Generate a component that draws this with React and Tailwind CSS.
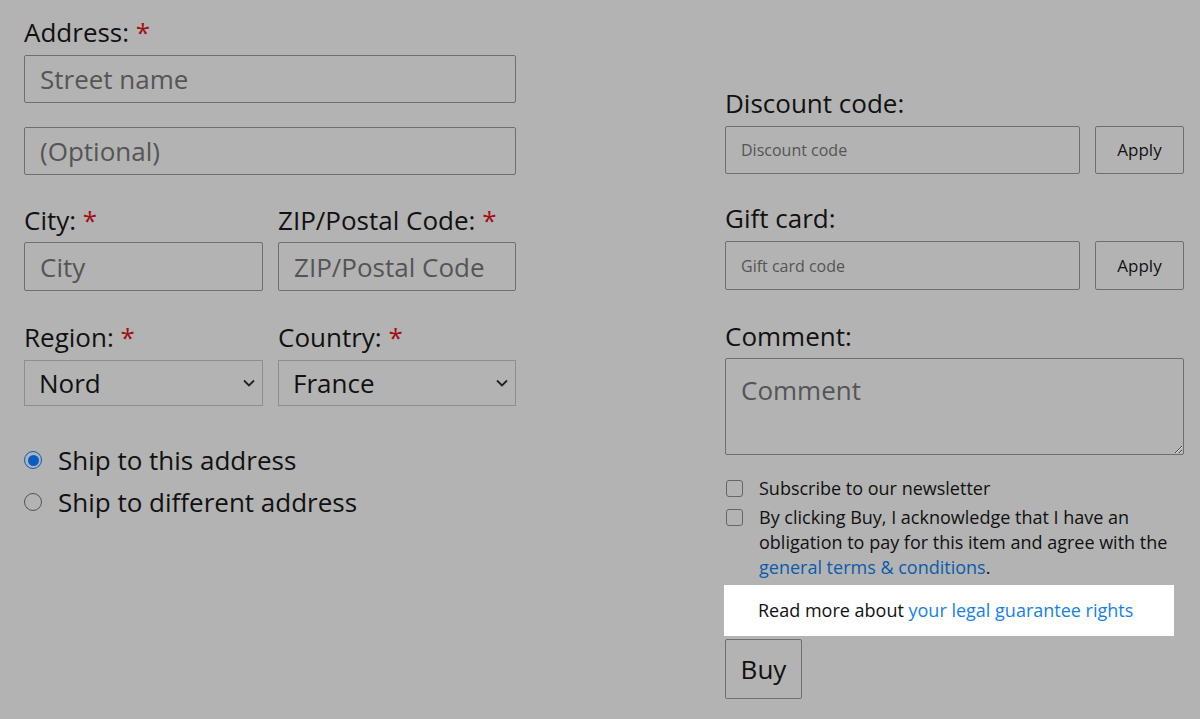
const font = { fontFamily: '"Open Sans", "Noto Sans", sans-serif' };

function Label({ children, required }) {
  return (
    <div className="text-[26px] leading-[34px] text-[#111]">
      {children}
      {required && <span className="text-[#a01010]"> *</span>}
    </div>
  );
}

function TextInput({ placeholder, h = "h-[48px]", size = "text-[26px]" }) {
  return (
    <input
      placeholder={placeholder}
      className={`w-full ${h} ${size} px-[15px] bg-transparent border border-[#6f6f6f] rounded-[2px] outline-none placeholder:text-[#555]`}
    />
  );
}

function Select({ value }) {
  return (
    <div className="relative h-[46px] border border-[#8e8e8e] flex items-center pl-[14px] text-[26px] text-[#111]">
      {value}
      <svg className="absolute right-[6px] top-[17px]" width="14" height="10" viewBox="0 0 14 10">
        <path d="M2 2.5 L7 7.5 L12 2.5" fill="none" stroke="#222" strokeWidth="1.8" />
      </svg>
    </div>
  );
}

function Checkbox() {
  return <span className="shrink-0 mt-[4px] ml-[1px] w-[17px] h-[17px] border-[1.5px] border-[#666] rounded-[3px]" />;
}

export default function App() {
  return (
    <div style={font} className="w-[1200px] h-[719px] bg-[#b3b3b3] flex pl-[24px] overflow-hidden">
      <div className="w-[492px] pt-[15px] flex flex-col">
        <Label required>Address:</Label>
        <div className="mt-[6px]">
          <TextInput placeholder="Street name" />
        </div>
        <div className="mt-[24px]">
          <TextInput placeholder="(Optional)" />
        </div>
        <div className="mt-[28px] grid grid-cols-[239px_238px] gap-x-[15px]">
          <div>
            <Label required>City:</Label>
            <div className="mt-[5px]">
              <TextInput placeholder="City" h="h-[49px]" />
            </div>
          </div>
          <div>
            <Label required>ZIP/Postal Code:</Label>
            <div className="mt-[5px]">
              <TextInput placeholder="ZIP/Postal Code" h="h-[49px]" />
            </div>
          </div>
        </div>
        <div className="mt-[29px] grid grid-cols-[239px_238px] gap-x-[15px]">
          <div>
            <Label required>Region:</Label>
            <div className="mt-[6px]">
              <Select value="Nord" />
            </div>
          </div>
          <div>
            <Label required>Country:</Label>
            <div className="mt-[6px]">
              <Select value="France" />
            </div>
          </div>
        </div>
        <div className="mt-[33px] flex flex-col text-[26px] leading-[42px] text-[#111]">
          <div className="flex items-center">
            <span className="w-[18px] h-[18px] rounded-full border-[1.5px] border-[#0b5bc4] flex items-center justify-center">
              <span className="w-[11px] h-[11px] rounded-full bg-[#0b5bc4]" />
            </span>
            <span className="ml-[16px]">Ship to this address</span>
          </div>
          <div className="flex items-center">
            <span className="w-[18px] h-[18px] rounded-full border-[1.5px] border-[#555]" />
            <span className="ml-[16px]">Ship to different address</span>
          </div>
        </div>
      </div>

      <div className="ml-[209px] w-[459px] pt-[86px] flex flex-col">
        <Label>Discount code:</Label>
        <div className="mt-[6px] flex gap-[15px]">
          <TextInput placeholder="Discount code" size="text-[16px]" />
          <button className="shrink-0 w-[89px] h-[48px] border border-[#6f6f6f] rounded-[2px] text-[17px] text-[#111]">Apply</button>
        </div>
        <div className="mt-[27px]">
          <Label>Gift card:</Label>
        </div>
        <div className="mt-[6px] flex gap-[15px]">
          <TextInput placeholder="Gift card code" h="h-[49px]" size="text-[16px]" />
          <button className="shrink-0 w-[89px] h-[49px] border border-[#6f6f6f] rounded-[2px] text-[17px] text-[#111]">Apply</button>
        </div>
        <div className="mt-[29px]">
          <Label>Comment:</Label>
        </div>
        <textarea
          placeholder="Comment"
          className="mt-[5px] h-[97px] w-full px-[15px] py-[14px] bg-transparent border border-[#6f6f6f] rounded-[2px] text-[26px] leading-[34px] outline-none resize placeholder:text-[#555]"
        />
        <div className="mt-[21px] flex flex-col text-[18px] leading-[25px] text-[#111]">
          <div className="flex">
            <Checkbox />
            <span className="ml-[16px]">Subscribe to our newsletter</span>
          </div>
          <div className="mt-[4px] flex">
            <Checkbox />
            <span className="ml-[16px]">
              By clicking Buy, I acknowledge that I have an obligation to pay for this item and agree with the{" "}
              <a className="text-[#0a5cae]">general terms &amp; conditions</a>.
            </span>
          </div>
        </div>
        <div className="mt-[5px] -ml-[1px] w-[450px] h-[51px] bg-white flex items-center pl-[34px] text-[18px] text-[#111]">
          <span>
            Read more about <a className="text-[#1580ea]">your legal guarantee rights</a>
          </span>
        </div>
        <button className="mt-[3px] w-[77px] h-[60px] border border-[#6f6f6f] rounded-[2px] text-[26px] text-[#111]">Buy</button>
      </div>
    </div>
  );
}
